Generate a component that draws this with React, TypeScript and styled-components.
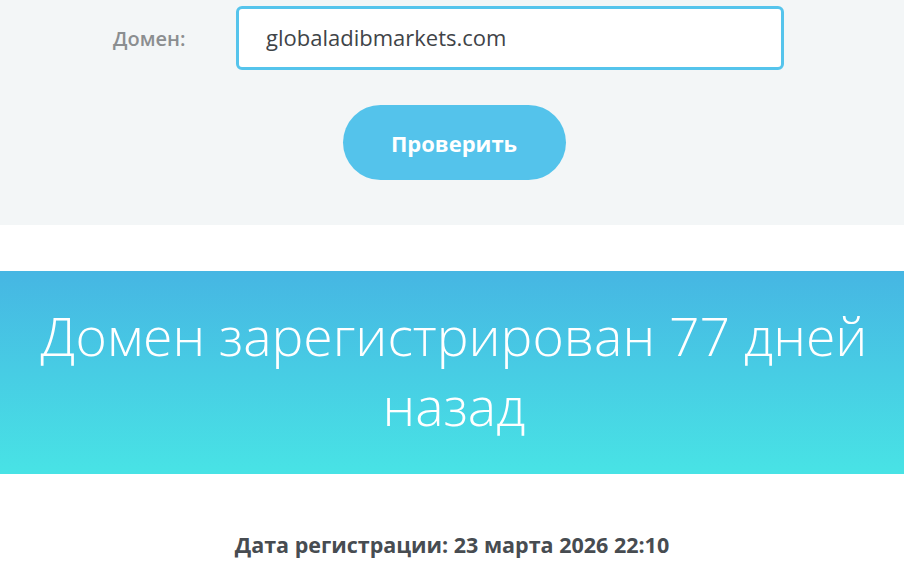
import React from "react";
import styled, { createGlobalStyle } from "styled-components";

const Global = createGlobalStyle`
  html, body { margin: 0; padding: 0; background: #ffffff; }
  body { font-family: "Open Sans", "DejaVu Sans", sans-serif; }
  * { box-sizing: border-box; }
`;

const Page = styled.div`
  width: 904px;
  height: 569px;
  overflow: hidden;
  display: flex;
  flex-direction: column;
`;

const FormSection = styled.section`
  background: #f3f6f7;
  padding: 6px 0 45px;
  display: flex;
  flex-direction: column;
  align-items: center;
  gap: 35px;
`;

const FieldRow = styled.div`
  width: 671px;
  margin-right: 7px;
  display: flex;
  align-items: center;
`;

const Label = styled.label`
  width: 123px;
  font-size: 20px;
  font-weight: 600;
  color: #8b8e90;
`;

const Input = styled.input`
  width: 548px;
  height: 64px;
  border: 3px solid #55c4ec;
  border-radius: 6px;
  background: #ffffff;
  padding: 0 27px 3px;
  font-family: inherit;
  font-size: 22px;
  font-weight: 500;
  color: #3f4448;
  outline: none;
`;

const Button = styled.button`
  width: 223px;
  height: 75px;
  margin-left: 4px;
  border: none;
  border-radius: 38px;
  background: #54c3eb;
  color: #ffffff;
  font-family: inherit;
  font-size: 22px;
  font-weight: 700;
  cursor: pointer;
`;

const Spacer = styled.div`
  height: 46px;
  background: #ffffff;
`;

const Banner = styled.section`
  height: 203px;
  background: linear-gradient(180deg, #46b6e3 0%, #48e3e5 100%);
  display: flex;
  align-items: center;
  justify-content: center;
  padding: 0 20px 3px 24px;
`;

const Heading = styled.h1`
  margin: 0;
  max-width: 864px;
  text-align: center;
  color: #ffffff;
  font-size: 53.5px;
  font-weight: 300;
  line-height: 70px;
`;

const Info = styled.p`
  margin: 56px 0 0;
  text-align: center;
  font-size: 21.5px;
  font-weight: 700;
  color: #474c51;
`;

export default function App() {
  return (
    <Page>
      <Global />
      <FormSection>
        <FieldRow>
          <Label htmlFor="domain">Домен:</Label>
          <Input id="domain" defaultValue="globaladibmarkets.com" />
        </FieldRow>
        <Button>Проверить</Button>
      </FormSection>
      <Spacer />
      <Banner>
        <Heading>Домен зарегистрирован 77 дней назад</Heading>
      </Banner>
      <Info>Дата регистрации: 23 марта 2026 22:10</Info>
    </Page>
  );
}
